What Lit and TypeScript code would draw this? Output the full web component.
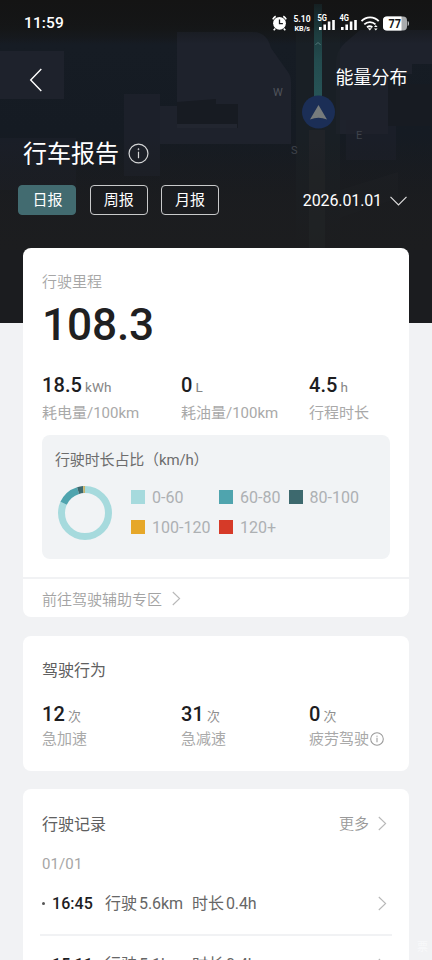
import { LitElement, html, svg, css } from "lit";
import { customElement, property } from "lit/decorators.js";

@customElement("chevron-icon")
class ChevronIcon extends LitElement {
  static styles = css`
    :host { display: block; width: 9px; height: 15px; }
    svg { display: block; }
  `;
  render() {
    return html`<svg width="9" height="15" viewBox="0 0 9 15" fill="none" stroke="#b8b8b8" stroke-width="1.1"><path d="M.8 1 7.6 7.5.8 14" /></svg>`;
  }
}

@customElement("info-icon")
class InfoIcon extends LitElement {
  @property({ type: Number }) size = 14;
  static styles = css`
    :host { display: block; }
    svg { display: block; }
  `;
  render() {
    const stroke = this.size < 18 ? 1.5 : 1.15;
    return html`<svg width=${this.size} height=${this.size} viewBox="0 0 20 20" fill="none" stroke="currentColor" stroke-width=${stroke}>
      <circle cx="10" cy="10" r="9" /><path d="M10 8.300v6.200" /><circle cx="10" cy="5.900" r=".6" fill="currentColor" stroke-width=".5" />
    </svg>`;
  }
}

@customElement("map-backdrop")
class MapBackdrop extends LitElement {
  static styles = css`
    :host { display: block; }
    svg { display: block; font-family: Roboto, "Liberation Sans", sans-serif; }
  `;
  render() {
    return html`<svg width="432" height="323" viewBox="0 0 432 323">
      <defs>
        <linearGradient id="base" x1="0" y1="0" x2="0" y2="1">
          <stop offset="0" stop-color="#141414" /><stop offset=".08" stop-color="#161718" />
          <stop offset=".14" stop-color="#161c24" /><stop offset=".4" stop-color="#151b23" />
          <stop offset=".58" stop-color="#181b20" /><stop offset=".8" stop-color="#1c1d1f" />
          <stop offset="1" stop-color="#1c1d1f" />
        </linearGradient>
        <linearGradient id="fade" x1="0" y1="0" x2="0" y2="1">
          <stop offset="0" stop-color="#1c1d1f" stop-opacity="0" /><stop offset="1" stop-color="#1c1d1f" />
        </linearGradient>
        <linearGradient id="top" x1="0" y1="0" x2="0" y2="1">
          <stop offset="0" stop-color="#141414" /><stop offset=".5" stop-color="#141516" stop-opacity=".75" />
          <stop offset="1" stop-color="#141618" stop-opacity="0" />
        </linearGradient>
        <linearGradient id="route" x1="0" y1="0" x2="0" y2="1">
          <stop offset="0" stop-color="#152022" /><stop offset=".3" stop-color="#1d3c3e" /><stop offset=".6" stop-color="#234b4e" /><stop offset="1" stop-color="#275457" />
        </linearGradient>
      </defs>
      <rect width="432" height="323" fill="url(#base)" />
      <g fill="#1e222c">
        <rect x="0" y="51" width="64" height="48" />
        <path d="M177 32h76q14 0 18 16l17 24q3 4 3 10v62H160v-38h17z" />
        <rect x="124" y="94" width="36" height="82" opacity=".8" />
        <path d="M336 64q0-14 10-22l14-12h72v34h-20v10h-24v60h-52z" />
        <rect x="0" y="138" width="76" height="52" opacity=".5" />
        <rect x="346" y="120" width="50" height="40" opacity=".6" />
      </g>
      <g fill="#171b22">
        <path d="M177 102l39-3v5h22v24h-61z" /><rect x="177" y="124" width="60" height="4" fill="#222630" />
        <rect x="388" y="84" width="44" height="42" />
      </g>
      <rect x="296" y="28" width="44" height="295" fill="#1b2227" opacity=".65" />
      <rect x="309" y="130" width="16" height="193" fill="#202328" />
      <path d="M216 226 300 196M340 190l58-18v26l-58 20z" fill="#1e2227" opacity=".6" />
      <rect y="140" width="432" height="110" fill="url(#fade)" />
      <rect y="250" width="432" height="73" fill="#1c1d1f" opacity=".9" />
      <rect x="309" y="170" width="16" height="78" fill="#222427" opacity=".6" />
      <rect width="432" height="44" fill="url(#top)" />
      <rect x="314" y="4" width="8" height="94" fill="url(#route)" />
      <path d="M315.500 45q2.500-4.500 5 0" fill="none" stroke="#4e7375" stroke-width="1" />
      <circle cx="318.500" cy="112" r="16.500" fill="#1b2e56" />
      <path d="M318.500 105 327 119.500q-8.500-3.500-17 0z" fill="#767b7c" />
      <g fill="#50545b" font-size="11">
        <text x="273" y="95.500">W</text><text x="356" y="138.500" fill="#3f434b">E</text><text x="291" y="154" fill="#3f434b">S</text>
      </g>
    </svg>`;
  }
}

@customElement("status-bar")
class StatusBar extends LitElement {
  static styles = css`
    :host { display: flex; height: 46px; align-items: center; justify-content: space-between; padding: 0 23px 0 24px; color: #fff; font-family: Roboto, sans-serif; }
    .clock { font-size: 15.500px; font-weight: 500; letter-spacing: .1px; }
    svg { display: block; font-family: Roboto, "Liberation Sans", sans-serif; font-weight: 700; }
  `;
  signal(x: number) {
    return svg`<rect x=${x} y="18.500" width="2.600" height="3" /><rect x=${x + 4.4} y="16" width="2.600" height="5.500" /><rect x=${x + 8.8} y="13" width="2.600" height="8.500" /><rect x=${x + 13.2} y="11.500" width="2.600" height="10" />`;
  }
  render() {
    return html`<span class="clock">11:59</span>
      <svg width="137" height="30" viewBox="0 0 137 30" fill="#fff">
        <g transform="translate(-.5 0)">
          <circle cx="8" cy="15.300" r="6.400" />
          <path d="M8 11.500v4.200h3.400" fill="none" stroke="#17191c" stroke-width="1.300" />
          <path d="M1.300 11.300A8 8 0 0 1 4.200 8.200M11.800 8.200a8 8 0 0 1 2.900 3.100M3.800 20.500 2.200 22.300M12.200 20.500l1.600 1.800" fill="none" stroke="#fff" stroke-width="1.600" />
        </g>
        <text x="21.500" y="14.300" font-size="9" textLength="17" lengthAdjust="spacingAndGlyphs">5.10</text>
        <text x="22.500" y="22.500" font-size="8" textLength="15.500" lengthAdjust="spacingAndGlyphs">KB/s</text>
        <text x="45.500" y="13.200" font-size="8.500" textLength="9.500" lengthAdjust="spacingAndGlyphs">5G</text>
        <text x="67.500" y="13.200" font-size="8.500" textLength="9.500" lengthAdjust="spacingAndGlyphs">4G</text>
        <g transform="translate(0 .5)">${this.signal(47)}${this.signal(69)}</g>
        <g fill="none" stroke="#fff" stroke-width="1.800">
          <path d="M89.500 13.200a11.500 11.500 0 0 1 17.200 0M92.300 16.400a8 8 0 0 1 11.200 0M95 19.300a4.500 4.500 0 0 1 5.400 0" />
        </g>
        <path d="M95.800 20.300h4l-2 2.200z" />
        <path d="M102 19l1.800-2.100L105.600 19zM102 20.400h3.600l-1.800 2.100z" />
        <rect x="111" y="8.500" width="24" height="14" rx="4" fill="#a9abad" />
        <path d="M115 8.500h14.500v14H115a4 4 0 0 1-4-4v-6a4 4 0 0 1 4-4z" />
        <path d="M135.700 13q1.300.3 1.300 2.500t-1.300 2.500z" fill="#c5c6c7" />
        <text x="116.500" y="19.800" font-size="12" fill="#141618" textLength="12.500" lengthAdjust="spacingAndGlyphs">77</text>
      </svg>`;
  }
}

type Metric = { value: string; unit: string; label: string; info?: boolean };
type Share = { label: string; color: string; portion: number };

@customElement("metric-row")
class MetricRow extends LitElement {
  @property({ attribute: false }) items: Metric[] = [];
  @property({ type: Boolean, reflect: true }) tight = false;
  static styles = css`
    :host { display: grid; grid-template-columns: 139px 128px 1fr; }
    .value { display: flex; align-items: baseline; height: 24px; line-height: 24px; white-space: nowrap; }
    .value b { font-size: 20px; font-weight: 500; color: #1d1d1f; letter-spacing: .1px; }
    .value span { font-size: 13.500px; color: #858585; margin-left: 3px; font-weight: 390; }
    .label { display: flex; align-items: center; gap: 1px; margin-top: 6px; height: 20px; line-height: 20px; font-size: 15px; color: #a9a9a9; white-space: nowrap; font-weight: 390; }
    :host([tight]) .label { margin-top: 3px; }
    :host([tight]) .value span { font-size: 13px; color: #8f8f8f; }
    info-icon { color: #999; }
  `;
  render() {
    return this.items.map((m) => html`<div>
      <div class="value"><b>${m.value}</b><span>${m.unit}</span></div>
      <div class="label">${m.label}${m.info ? html`<info-icon .size=${14}></info-icon>` : ""}</div>
    </div>`);
  }
}

@customElement("share-donut")
class ShareDonut extends LitElement {
  @property({ attribute: false }) shares: Share[] = [];
  static styles = css`
    :host { display: block; width: 54px; height: 54px; }
    svg { display: block; }
  `;
  render() {
    let start = 0;
    return html`<svg width="54" height="54" viewBox="0 0 54 54"><g transform="rotate(-90 27 27)" fill="none" stroke-width="7">
      ${this.shares.map((s) => {
        const arc = svg`<circle cx="27" cy="27" r="23.500" stroke=${s.color} pathLength="100" stroke-dasharray="${s.portion} 100" stroke-dashoffset=${-start} />`;
        start += s.portion;
        return s.portion ? arc : "";
      })}
    </g></svg>`;
  }
}

@customElement("app-root")
class AppRoot extends LitElement {
  static styles = css`
    :host { display: block; position: relative; height: 960px; overflow: hidden; background: #f1f2f4; font-family: Roboto, "Noto Sans CJK SC", sans-serif; color: #666; }
    * { box-sizing: border-box; }
    .backdrop { position: absolute; left: 0; top: 0; }
    .page { position: relative; }
    .nav { display: flex; justify-content: space-between; align-items: center; height: 64px; padding: 0 24.500px 2px 29px; color: #fff; }
    .nav svg { display: block; margin-top: 6px; }
    .nav span { font-size: 18px; line-height: 24px; margin-top: 1px; font-weight: 390; }
    .title { display: flex; align-items: center; gap: 8.500px; height: 40px; margin-top: 24px; padding-left: 23px; color: #fff; font-size: 24px; line-height: 40px; font-weight: 390; }
    .title info-icon { color: #d4d5d6; margin-top: -1px; }
    .filters { display: flex; align-items: center; height: 30px; margin-top: 11px; padding: 0 25px 0 18.400px; gap: 13.300px; color: #fff; }
    .tab { width: 58px; height: 30px; border: 1px solid #c9cacb; border-radius: 4px; text-align: center; font-size: 15px; line-height: 29px; font-weight: 390; }
    .tab.on { background: #426b70; border-color: #426b70; }
    .date { display: flex; align-items: center; gap: 8px; margin-left: auto; font-size: 16px; letter-spacing: -.12px; padding-top: 1px; }
    .card { margin: 0 23px 19px; background: #fff; border-radius: 8px; padding: 0 19px; }
    .overview { margin-top: 33px; height: 369px; display: flow-root; }
    .caption { margin-top: 24px; height: 20px; line-height: 20px; font-size: 15px; color: #a6a6a6; font-weight: 350; }
    .distance { height: 50px; line-height: 50px; margin-top: 8px; font-size: 44.200px; font-weight: 500; color: #1f2021; letter-spacing: -.15px; }
    .overview metric-row { margin-top: 23px; }
    .panel { margin-top: 12px; height: 124px; background: #f1f3f5; border-radius: 8px; padding: 14px 13px 0; }
    .panel-title { font-size: 15px; height: 22px; line-height: 22px; color: #6d6d6d; font-weight: 390; white-space: nowrap; letter-spacing: -.15px; }
    .chart { display: flex; margin-top: 15px; margin-left: 3px; }
    .legend { display: grid; grid-template-columns: 88px 70px 70px; grid-auto-rows: 30px; margin: -.5px 0 0 19px; }
    .key { display: flex; align-items: center; gap: 7px; font-size: 16px; line-height: 24px; color: #adb0b3; height: 24px; white-space: nowrap; }
    .swatch { width: 14px; height: 14px; margin-top: -1px; }
    .zone { display: flex; align-items: center; gap: 10px; margin: 18px -19px 0; padding: 0 19px; border-top: 2px solid #f1f2f4; height: 40px; font-size: 15px; color: #a3a3a3; font-weight: 350; }
    .behavior { height: 135px; display: flow-root; margin-bottom: 18px; }
    h2 { margin: 23px 0 0; height: 24px; line-height: 24px; font-size: 16px; font-weight: 390; color: #606060; }
    .behavior metric-row { margin-top: 18.500px; }
    .records { height: 220px; margin-bottom: 0; display: flow-root; }
    .records-head { display: flex; align-items: center; justify-content: space-between; }
    .records-head h2 { margin-top: 24px; }
    .more { display: flex; align-items: center; gap: 9px; margin: 21px 3px 0 0; font-size: 15px; line-height: 22px; color: #999; font-weight: 350; }
    .day { margin-top: 17px; height: 20px; line-height: 20px; font-size: 15px; color: #a6a6a6; letter-spacing: .1px; }
    .trip { display: flex; align-items: center; height: 61.500px; margin: 0 -2px; padding: 0 5px 0 2px; border-bottom: 2px solid #f1f2f4; font-size: 16px; line-height: 24px; white-space: nowrap; color: #666; font-weight: 390; }
    .dot { width: 3px; height: 3px; border-radius: 50%; background: #555; margin-right: 7px; }
    .trip b { width: 53px; font-weight: 500; color: #1d1d1f; letter-spacing: .05px; }
    .trip i { font-style: normal; margin-left: 2px; letter-spacing: -.1px; }
    .trip .span { margin-left: 9px; }
    .trip chevron-icon { margin-left: auto; }
    .mark { position: absolute; right: 4px; bottom: 6px; font-size: 11px; line-height: 12px; color: #f8f9fa; }
  `;

  shares: Share[] = [
    { label: "0-60", color: "#a6dadd", portion: 81.8 },
    { label: "60-80", color: "#4fa4ae", portion: 13.4 },
    { label: "80-100", color: "#3d696e", portion: 3.6 },
    { label: "100-120", color: "#c9b469", portion: 1.2 },
    { label: "120+", color: "#d63a28", portion: 0 },
  ];
  swatches = ["#a6dadd", "#4fa4ae", "#3d696e", "#e6a729", "#d63a28"];
  usage: Metric[] = [
    { value: "18.5", unit: "kWh", label: "耗电量/100km" },
    { value: "0", unit: "L", label: "耗油量/100km" },
    { value: "4.5", unit: "h", label: "行程时长" },
  ];
  behavior: Metric[] = [
    { value: "12", unit: "次", label: "急加速" },
    { value: "31", unit: "次", label: "急减速" },
    { value: "0", unit: "次", label: "疲劳驾驶", info: true },
  ];
  trips = [
    { at: "16:45", km: "5.6km", hours: "0.4h" },
    { at: "15:11", km: "5.1km", hours: "0.4h" },
  ];

  render() {
    return html`
      <map-backdrop class="backdrop"></map-backdrop>
      <div class="page">
        <status-bar></status-bar>
        <div class="nav">
          <svg width="13" height="24" viewBox="0 0 13 24" fill="none" stroke="#fff" stroke-width="1.400"><path d="M12.300 1 1.700 12l10.600 11" /></svg>
          <span>能量分布</span>
        </div>
        <div class="title">行车报告<info-icon .size=${21}></info-icon></div>
        <div class="filters">
          <div class="tab on">日报</div><div class="tab">周报</div><div class="tab">月报</div>
          <div class="date">2026.01.01<svg width="17" height="10" viewBox="0 0 17 10" fill="none" stroke="#ddd" stroke-width="1.200"><path d="M.5.8 8.500 9l8-8.200" /></svg></div>
        </div>
        <section class="card overview">
          <div class="caption">行驶里程</div>
          <div class="distance">108.3</div>
          <metric-row .items=${this.usage}></metric-row>
          <div class="panel">
            <div class="panel-title">行驶时长占比（km/h）</div>
            <div class="chart">
              <share-donut .shares=${this.shares}></share-donut>
              <div class="legend">
                ${this.shares.map((s, i) => html`<div class="key"><span class="swatch" style="background:${this.swatches[i]}"></span>${s.label}</div>`)}
              </div>
            </div>
          </div>
          <div class="zone">前往驾驶辅助专区<chevron-icon></chevron-icon></div>
        </section>
        <section class="card behavior">
          <h2>驾驶行为</h2>
          <metric-row tight .items=${this.behavior}></metric-row>
        </section>
        <section class="card records">
          <div class="records-head"><h2>行驶记录</h2><div class="more">更多<chevron-icon></chevron-icon></div></div>
          <div class="day">01/01</div>
          ${this.trips.map((t) => html`<div class="trip"><span class="dot"></span><b>${t.at}</b><span>行驶<i>${t.km}</i></span><span class="span">时长<i>${t.hours}</i></span><chevron-icon></chevron-icon></div>`)}
        </section>
      </div>
      <div class="mark">票</div>
    `;
  }
}
